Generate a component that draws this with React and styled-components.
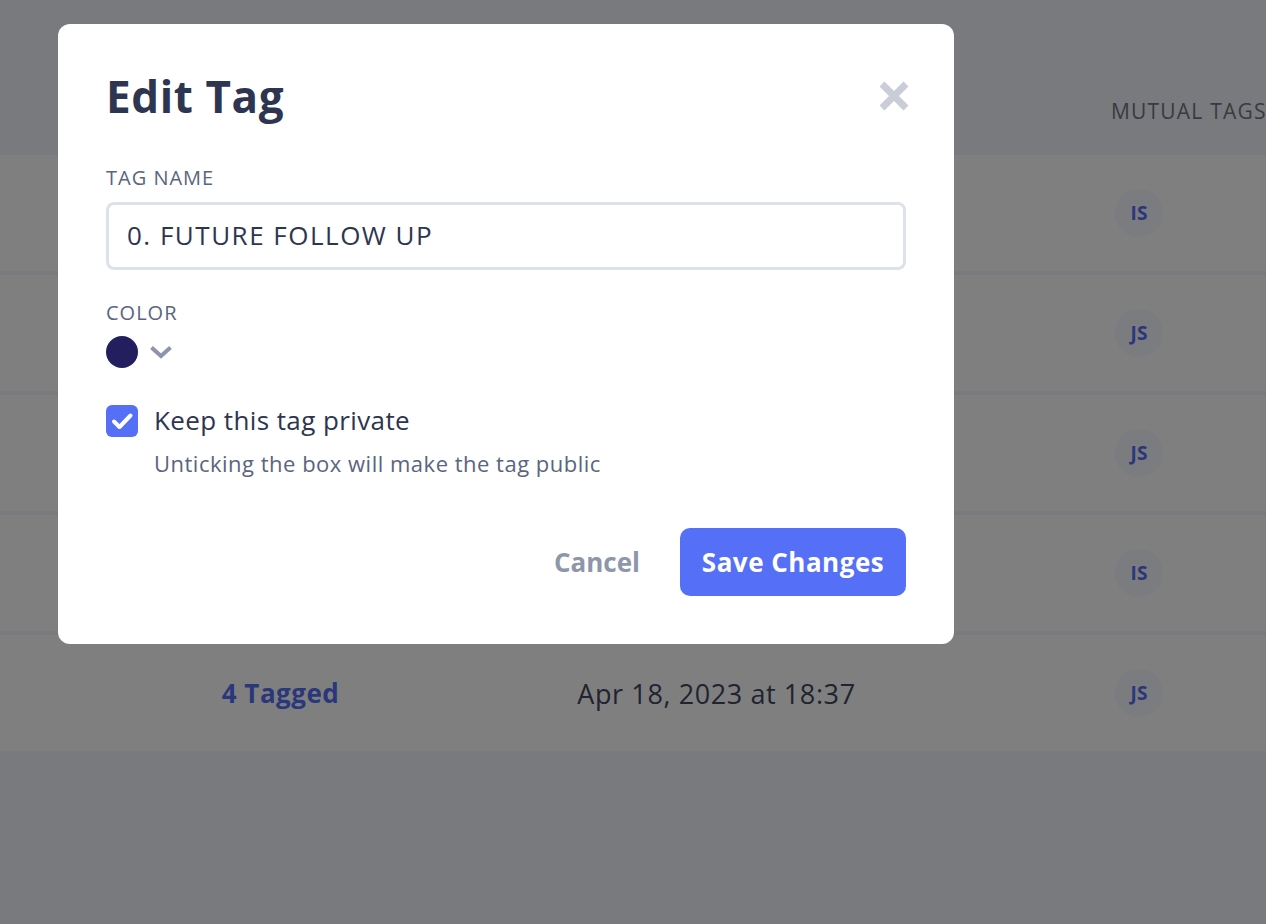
import React from "react";
import styled, { createGlobalStyle } from "styled-components";

const rows = [
  { tagged: "12 Tagged", date: "Mar 02, 2023 at 09:14", owner: "IS" },
  { tagged: "7 Tagged", date: "Mar 11, 2023 at 14:52", owner: "JS" },
  { tagged: "3 Tagged", date: "Mar 27, 2023 at 11:03", owner: "JS" },
  { tagged: "9 Tagged", date: "Apr 04, 2023 at 16:20", owner: "IS" },
  { tagged: "4 Tagged", date: "Apr 18, 2023 at 18:37", owner: "JS" },
];

function App() {
  return (
    <>
      <GlobalStyle />
      <Page>
        <HeaderRow>
          <HeadCell />
          <HeadCell />
          <HeadCell />
          <HeadCell />
          <HeadCell>MUTUAL TAGS</HeadCell>
        </HeaderRow>
        {rows.map((r) => (
          <Row key={r.date}>
            <span />
            <TaggedCell>{r.tagged}</TaggedCell>
            <DateCell>{r.date}</DateCell>
            <span />
            <AvatarCell>
              <Avatar>{r.owner}</Avatar>
            </AvatarCell>
          </Row>
        ))}
      </Page>

      <Overlay>
        <Modal>
          <TitleBar>
            <Title>Edit Tag</Title>
            <CloseButton aria-label="Close">
              <svg width="32" height="32" viewBox="0 0 32 32">
                <path d="M4 4 L28 28 M28 4 L4 28" stroke="#c9cdd8" strokeWidth="7" fill="none" />
              </svg>
            </CloseButton>
          </TitleBar>

          <Label>Tag name</Label>
          <Input defaultValue="0. FUTURE FOLLOW UP" />

          <Label $gap={31}>Color</Label>
          <ColorPicker>
            <Swatch $color="#231f5f" />
            <svg width="24" height="14" viewBox="0 0 24 14">
              <path d="M2.5 2.5 L12 11 L21.5 2.5" stroke="#8e95aa" strokeWidth="4" fill="none" />
            </svg>
          </ColorPicker>

          <CheckRow>
            <CheckBox>
              <svg width="26" height="26" viewBox="0 0 26 26">
                <path d="M5 13.5 L10.5 19 L21.5 7.5" stroke="#fff" strokeWidth="4" fill="none" strokeLinecap="round" strokeLinejoin="round" />
              </svg>
            </CheckBox>
            <CheckText>
              <CheckLabel>Keep this tag private</CheckLabel>
              <Hint>Unticking the box will make the tag public</Hint>
            </CheckText>
          </CheckRow>

          <Actions>
            <CancelButton>Cancel</CancelButton>
            <SaveButton>Save Changes</SaveButton>
          </Actions>
        </Modal>
      </Overlay>
    </>
  );
}

const GlobalStyle = createGlobalStyle`
  html, body {
    margin: 0;
    padding: 0;
    background: #f2f4fc;
    font-family: "Open Sans", "Liberation Sans", sans-serif;
  }
  * { box-sizing: border-box; }
`;

const Page = styled.div`
  min-height: 924px;
  width: 1266px;
  overflow: hidden;
  display: flex;
  flex-direction: column;
  gap: 4px;
`;

const columns = "160px 241px 631px 79px 1fr";

const HeaderRow = styled.div`
  height: 151px;
  display: grid;
  grid-template-columns: ${columns};
  align-items: end;
  padding-bottom: 28px;
`;

const HeadCell = styled.div`
  font-size: 21px;
  letter-spacing: 1.2px;
  color: #747680;
  white-space: nowrap;
  line-height: 24px;
`;

const Row = styled.div`
  height: 116px;
  background: #fff;
  display: grid;
  grid-template-columns: ${columns};
  align-items: center;
`;

const TaggedCell = styled.div`
  text-align: center;
  font-size: 26px;
  letter-spacing: 0.5px;
  font-weight: 700;
  color: #5570f6;
`;

const DateCell = styled.div`
  text-align: center;
  font-size: 27px;
  letter-spacing: 0.6px;
  color: #3e4860;
`;

const AvatarCell = styled.div`
  padding-left: 4px;
`;

const Avatar = styled.div`
  width: 48px;
  height: 48px;
  border-radius: 50%;
  background: #f5f8ff;
  color: #5570f6;
  font-size: 19px;
  font-weight: 700;
  display: flex;
  align-items: center;
  justify-content: center;
`;

const Overlay = styled.div`
  position: fixed;
  inset: 0;
  background: rgba(0, 0, 0, 0.5);
  display: flex;
  align-items: flex-start;
  padding: 24px 0 0 58px;
`;

const Modal = styled.div`
  width: 896px;
  height: 620px;
  background: #fff;
  border-radius: 12px;
  padding: 48px;
  display: flex;
  flex-direction: column;
`;

const TitleBar = styled.div`
  display: flex;
  align-items: center;
  justify-content: space-between;
  height: 48px;
`;

const Title = styled.h1`
  margin: 0;
  font-size: 44px;
  line-height: 48px;
  font-weight: 700;
  letter-spacing: 0.6px;
  color: #2e3550;
`;

const CloseButton = styled.button`
  border: 0;
  background: none;
  padding: 0;
  margin-right: -4px;
  width: 32px;
  height: 32px;
  display: flex;
  cursor: pointer;
`;

const Label = styled.div`
  margin-top: ${(p) => p.$gap ?? 46}px;
  font-size: 20px;
  letter-spacing: 1px;
  line-height: 24px;
  text-transform: uppercase;
  color: #5b6480;
`;

const Input = styled.input`
  margin-top: 12px;
  width: 800px;
  height: 68px;
  border: 3px solid #dde2e9;
  border-radius: 8px;
  padding: 0 18px 3px;
  font-family: inherit;
  font-size: 26px;
  letter-spacing: 1.5px;
  color: #2e3550;
  outline: none;
`;

const ColorPicker = styled.div`
  margin-top: 11px;
  display: flex;
  align-items: center;
  gap: 11px;
`;

const Swatch = styled.div`
  width: 32px;
  height: 32px;
  border-radius: 50%;
  background: ${(p) => p.$color};
`;

const CheckRow = styled.div`
  margin-top: 37px;
  display: flex;
  gap: 16px;
`;

const CheckBox = styled.div`
  width: 32px;
  height: 32px;
  flex: none;
  border-radius: 6px;
  background: #5570f6;
  display: flex;
  align-items: center;
  justify-content: center;
`;

const CheckText = styled.div`
  display: flex;
  flex-direction: column;
`;

const CheckLabel = styled.div`
  font-size: 26px;
  letter-spacing: 0.4px;
  line-height: 30px;
  color: #2e3550;
`;

const Hint = styled.div`
  margin-top: 16px;
  font-size: 22px;
  letter-spacing: 0.5px;
  line-height: 24px;
  color: #5b6480;
`;

const Actions = styled.div`
  margin-top: auto;
  display: flex;
  justify-content: flex-end;
  align-items: center;
  gap: 40px;
`;

const CancelButton = styled.button`
  border: 0;
  background: none;
  padding: 0;
  font-family: inherit;
  font-size: 26px;
  font-weight: 700;
  color: #8e96ab;
  cursor: pointer;
`;

const SaveButton = styled.button`
  width: 226px;
  height: 68px;
  border: 0;
  border-radius: 10px;
  background: #566ff7;
  color: #fff;
  font-family: inherit;
  font-size: 26px;
  letter-spacing: 0.5px;
  font-weight: 700;
  cursor: pointer;
`;

export default App;
